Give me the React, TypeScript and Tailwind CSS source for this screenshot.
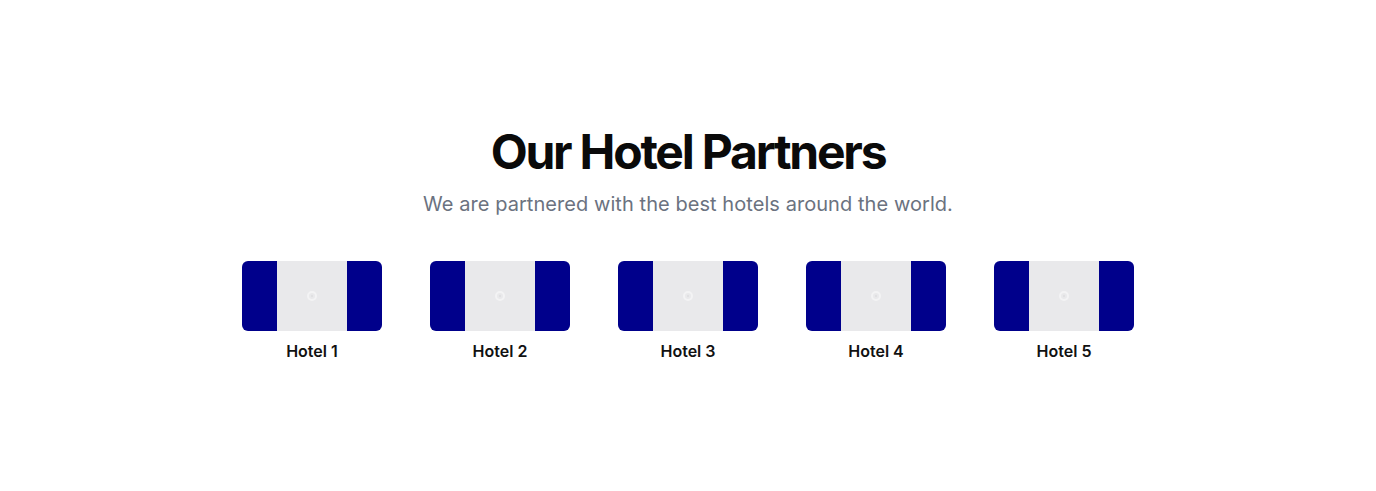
import React from "react";

const hotels = ["Hotel 1", "Hotel 2", "Hotel 3", "Hotel 4", "Hotel 5"];

export default function App() {
  return (
    <div
      className="w-full h-[491px] bg-white flex flex-col items-center pt-[126px]"
      style={{ fontFamily: "Inter, 'Noto Sans', sans-serif" }}
    >
      <h2 className="text-[48px] leading-[52px] font-bold tracking-[-0.046em] text-[#0a0a0a]">
        Our Hotel Partners
      </h2>
      <p className="mt-[12px] text-[20px] leading-[28px] tracking-[0.003em] text-[#6b7280]">
        We are partnered with the best hotels around the world.
      </p>
      <div className="mt-[43px] flex gap-[48px]">
        {hotels.map((h) => (
          <div key={h} className="flex flex-col items-center w-[140px]">
            <div className="w-[140px] h-[70px] rounded-[6px] bg-[#00008b] flex justify-center overflow-hidden">
              <div className="w-[70px] h-[70px] bg-[#e9e9eb] flex items-center justify-center">
                <svg width="12" height="12" viewBox="0 0 12 12">
                  <circle cx="6" cy="6" r="4" fill="none" stroke="#f3f3f4" strokeWidth="2" />
                  <circle cx="6" cy="6" r="1.2" fill="#e0e0e2" />
                </svg>
              </div>
            </div>
            <div className="mt-[10px] text-[16px] leading-[20px] font-semibold text-[#111]">
              {h}
            </div>
          </div>
        ))}
      </div>
    </div>
  );
}
